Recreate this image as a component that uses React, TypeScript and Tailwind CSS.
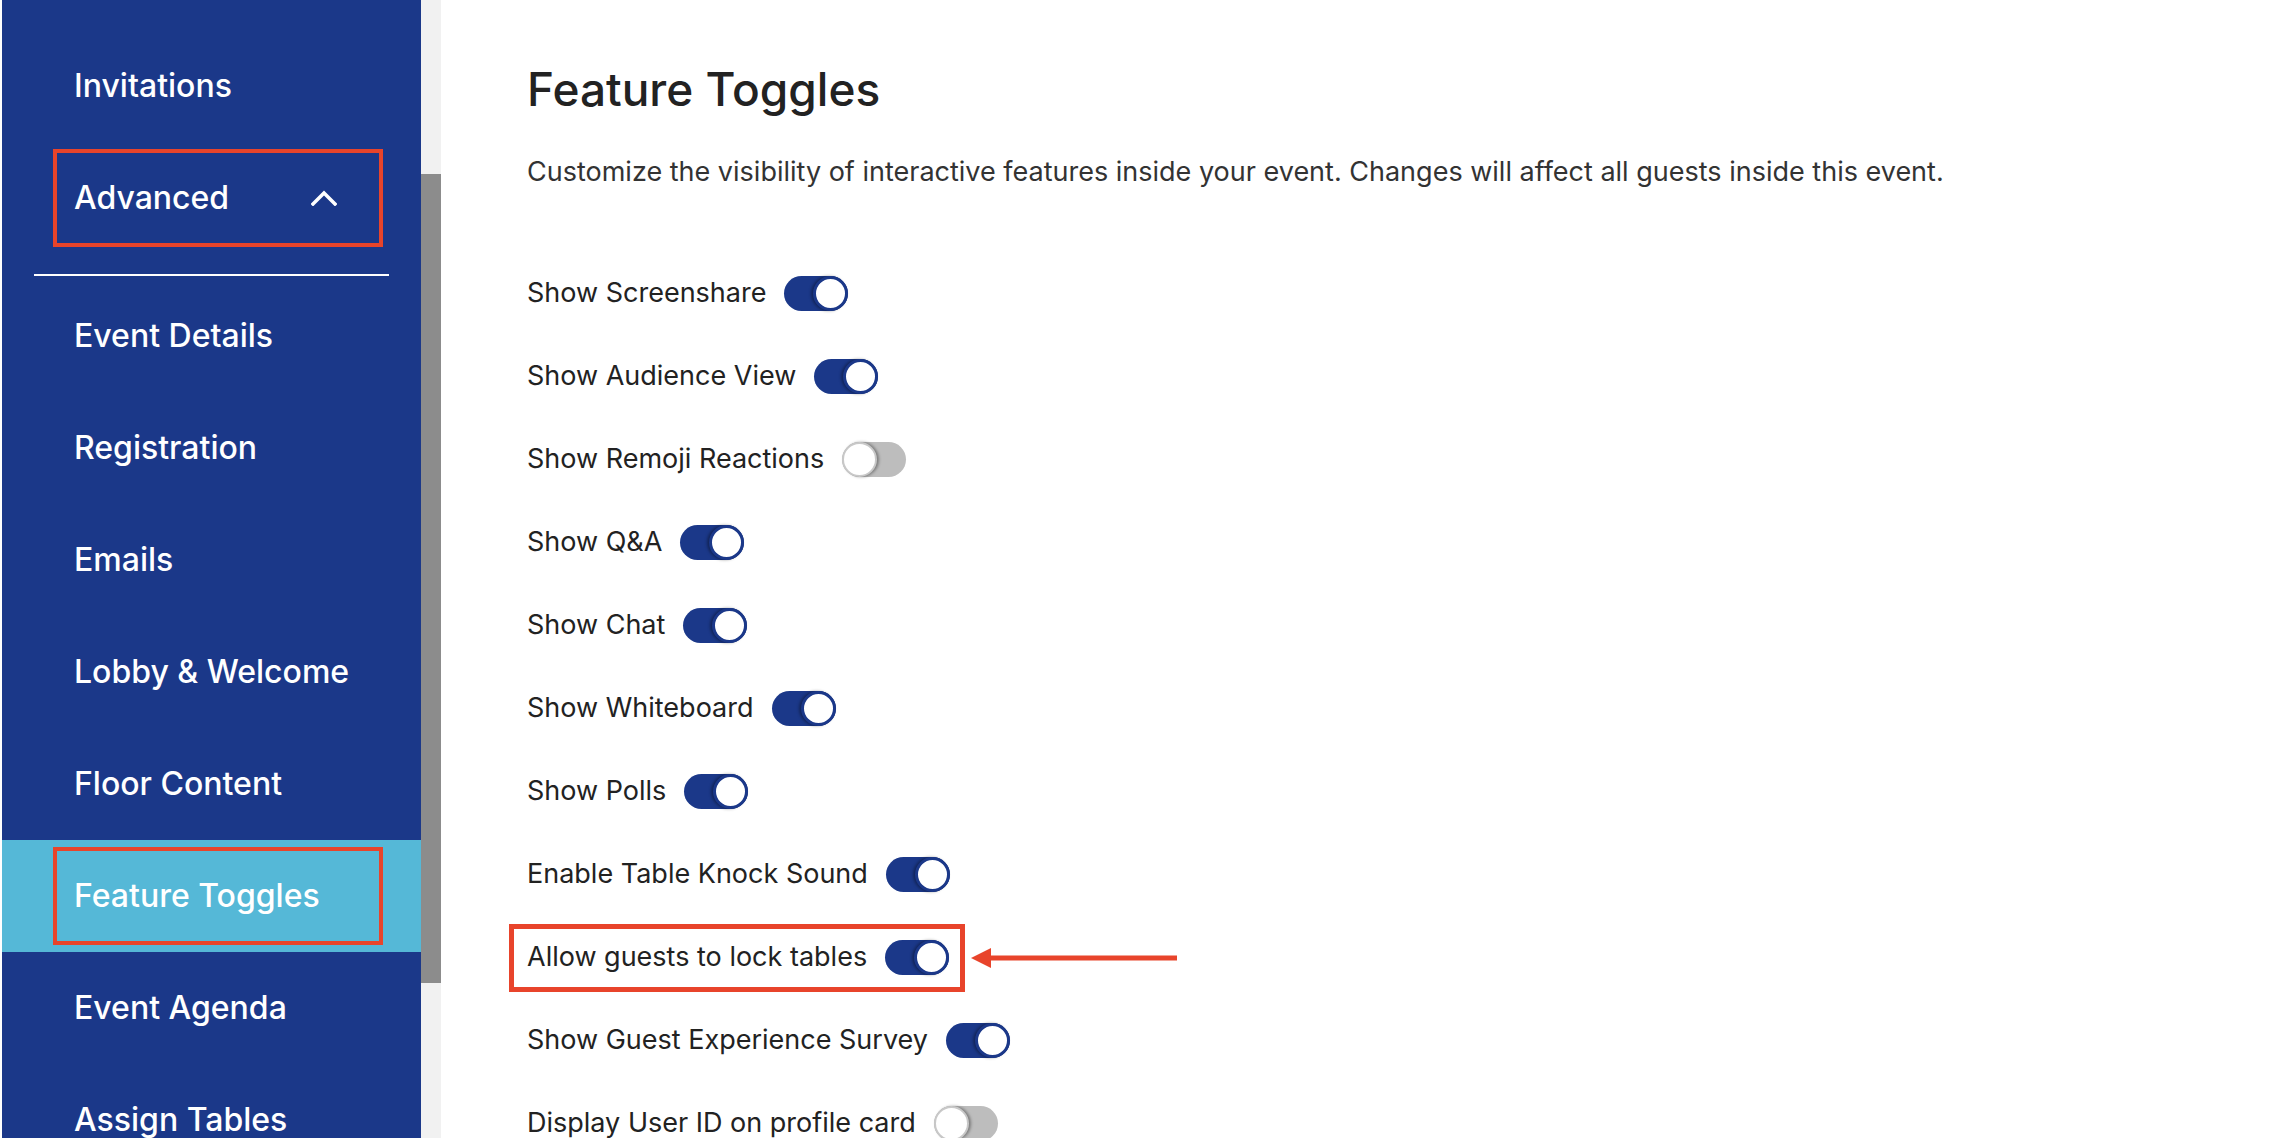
import React from "react";

const FONT = { fontFamily: "Inter, 'Noto Sans', 'Liberation Sans', sans-serif" };

const navTop = ["Invitations"];
const navItems = [
  "Event Details",
  "Registration",
  "Emails",
  "Lobby & Welcome",
  "Floor Content",
  "Feature Toggles",
  "Event Agenda",
  "Assign Tables",
];

const toggles = [
  { label: "Show Screenshare", on: true },
  { label: "Show Audience View", on: true },
  { label: "Show Remoji Reactions", on: false },
  { label: "Show Q&A", on: true },
  { label: "Show Chat", on: true },
  { label: "Show Whiteboard", on: true },
  { label: "Show Polls", on: true },
  { label: "Enable Table Knock Sound", on: true },
  { label: "Allow guests to lock tables", on: true, marked: true },
  { label: "Show Guest Experience Survey", on: true },
  { label: "Display User ID on profile card", on: false },
];

const Toggle = ({ on }: { on: boolean }) => (
  <div
    className={
      on
        ? "flex h-[35px] w-[64px] shrink-0 justify-end rounded-full bg-[#1b3889]"
        : "flex h-[35px] w-[64px] shrink-0 justify-start rounded-full bg-[#bdbdbd]"
    }
  >
    <div
      className={
        on
          ? "h-[35px] w-[35px] rounded-full border-[3px] border-[#1b3889] bg-white shadow-[-2px_0_3px_rgba(0,0,0,0.35)]"
          : "h-[35px] w-[35px] rounded-full border-[2px] border-[#c8c8c8] bg-white shadow-[2px_0_3px_rgba(0,0,0,0.35)]"
      }
    />
  </div>
);

const Arrow = () => (
  <svg width="206" height="22" viewBox="0 0 206 22" className="shrink-0">
    <polygon points="0,11 20,1 20,21" fill="#e8442b" />
    <rect x="18" y="8.5" width="188" height="5" fill="#e8442b" />
  </svg>
);

const Sidebar = () => (
  <aside className="flex h-full w-[441px] shrink-0 bg-white pl-[2px]">
    <nav className="h-full w-[419px] overflow-hidden bg-[#1b3889] pt-[30px] text-[32px] font-medium text-white">
      {navTop.map((item) => (
        <div key={item} className="flex h-[112px] items-center pl-[72px]">
          {item}
        </div>
      ))}

      <div className="flex h-[112px] items-center pl-[51px]">
        <div className="flex h-[98px] w-[330px] items-center justify-between border-4 border-[#e8442b] pl-[17px] pr-[42px]">
          <span>Advanced</span>
          <svg width="26" height="16" viewBox="0 0 26 16" fill="none">
            <path d="M2 14 L13 3 L24 14" stroke="white" strokeWidth="3.5" strokeLinecap="square" />
          </svg>
        </div>
      </div>
      <div className="ml-[32px] mt-[20px] mb-[4px] h-[2px] w-[355px] bg-white" />

      {navItems.map((item) =>
        item === "Feature Toggles" ? (
          <div key={item} className="flex h-[112px] items-center bg-[#55b8d7] pl-[51px]">
            <div className="flex h-[98px] w-[330px] items-center border-4 border-[#e8442b] pl-[17px]">
              {item}
            </div>
          </div>
        ) : (
          <div key={item} className="flex h-[112px] items-center pl-[72px]">
            {item}
          </div>
        )
      )}
    </nav>
    <div className="flex h-full w-[20px] flex-col bg-[#f1f1f1]">
      <div className="h-[174px]" />
      <div className="h-[809px] bg-[#8c8c8c]" />
    </div>
  </aside>
);

export default function App() {
  return (
    <div className="flex h-[1138px] w-[2288px] overflow-hidden bg-white" style={FONT}>
      <Sidebar />
      <main className="flex-1 pl-[86px] pt-[61px] text-[#222]">
        <h1 className="text-[46px] font-medium leading-[56px]">Feature Toggles</h1>
        <p className="mt-[37px] text-[27px] leading-[36px] text-[#333]">
          Customize the visibility of interactive features inside your event. Changes will affect all guests inside this event.
        </p>

        <div className="mt-[62px] flex flex-col">
          {toggles.map((t) =>
            t.marked ? (
              <div key={t.label} className="flex h-[83px] items-center">
                <div className="-ml-[18px] flex h-[68px] items-center gap-[18px] border-[5px] border-[#e8442b] pl-[13px] pr-[11px]">
                  <span className="text-[27px]">{t.label}</span>
                  <Toggle on={t.on} />
                </div>
                <div className="ml-[6px]">
                  <Arrow />
                </div>
              </div>
            ) : (
              <div key={t.label} className="flex h-[83px] items-center gap-[18px]">
                <span className="text-[27px]">{t.label}</span>
                <Toggle on={t.on} />
              </div>
            )
          )}
        </div>
      </main>
    </div>
  );
}
